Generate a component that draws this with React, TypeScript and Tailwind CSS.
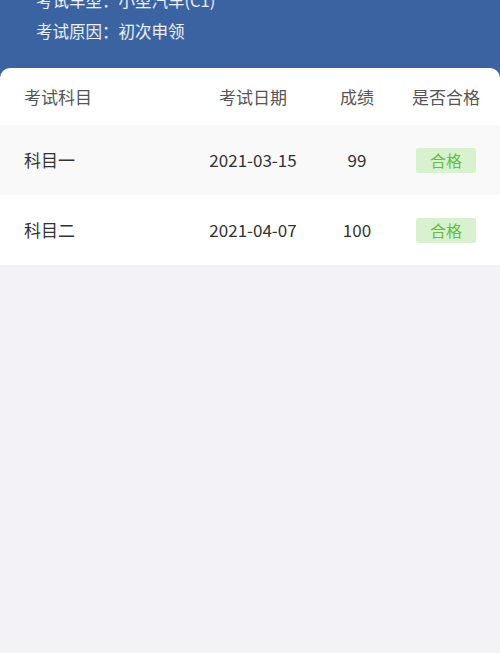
const font = { fontFamily: '"Noto Sans CJK SC", "Noto Sans", sans-serif' };

const rows = [
  { subject: "科目一", date: "2021-03-15", score: "99", pass: "合格" },
  { subject: "科目二", date: "2021-04-07", score: "100", pass: "合格" },
];

export default function App() {
  return (
    <div className="w-[500px] h-[653px] overflow-hidden bg-[#f2f2f7]" style={font}>
      <div className="bg-[#3c63a1]">
        <div className="pl-[36px] -mt-[15px] text-[16.5px] leading-[31px] text-white/90">
          <div>考试车型：小型汽车(C1)</div>
          <div>考试原因：初次申领</div>
        </div>
        <div className="mt-[21px] h-[57px] rounded-t-[10px] bg-white flex items-center pr-[4px] text-[17px] text-[#555]">
          <div className="pl-[24px] flex-1">考试科目</div>
          <div className="w-[130px] text-center">考试日期</div>
          <div className="w-[78px] text-center">成绩</div>
          <div className="w-[100px] text-center">是否合格</div>
        </div>
      </div>
      {rows.map((r, i) => (
        <div
          key={r.subject}
          className={`h-[70px] flex items-center pr-[4px] text-[17px] text-[#333] ${i === 0 ? "bg-[#f9f9f9]" : "bg-white"}`}
        >
          <div className="pl-[24px] flex-1">{r.subject}</div>
          <div className="w-[130px] text-center">{r.date}</div>
          <div className="w-[78px] text-center">{r.score}</div>
          <div className="w-[100px] flex justify-center">
            <span className="w-[60px] h-[25px] flex items-center justify-center rounded-[2px] bg-[#d8f2cf] text-[#67bd45] text-[16px]">
              {r.pass}
            </span>
          </div>
        </div>
      ))}
    </div>
  );
}
